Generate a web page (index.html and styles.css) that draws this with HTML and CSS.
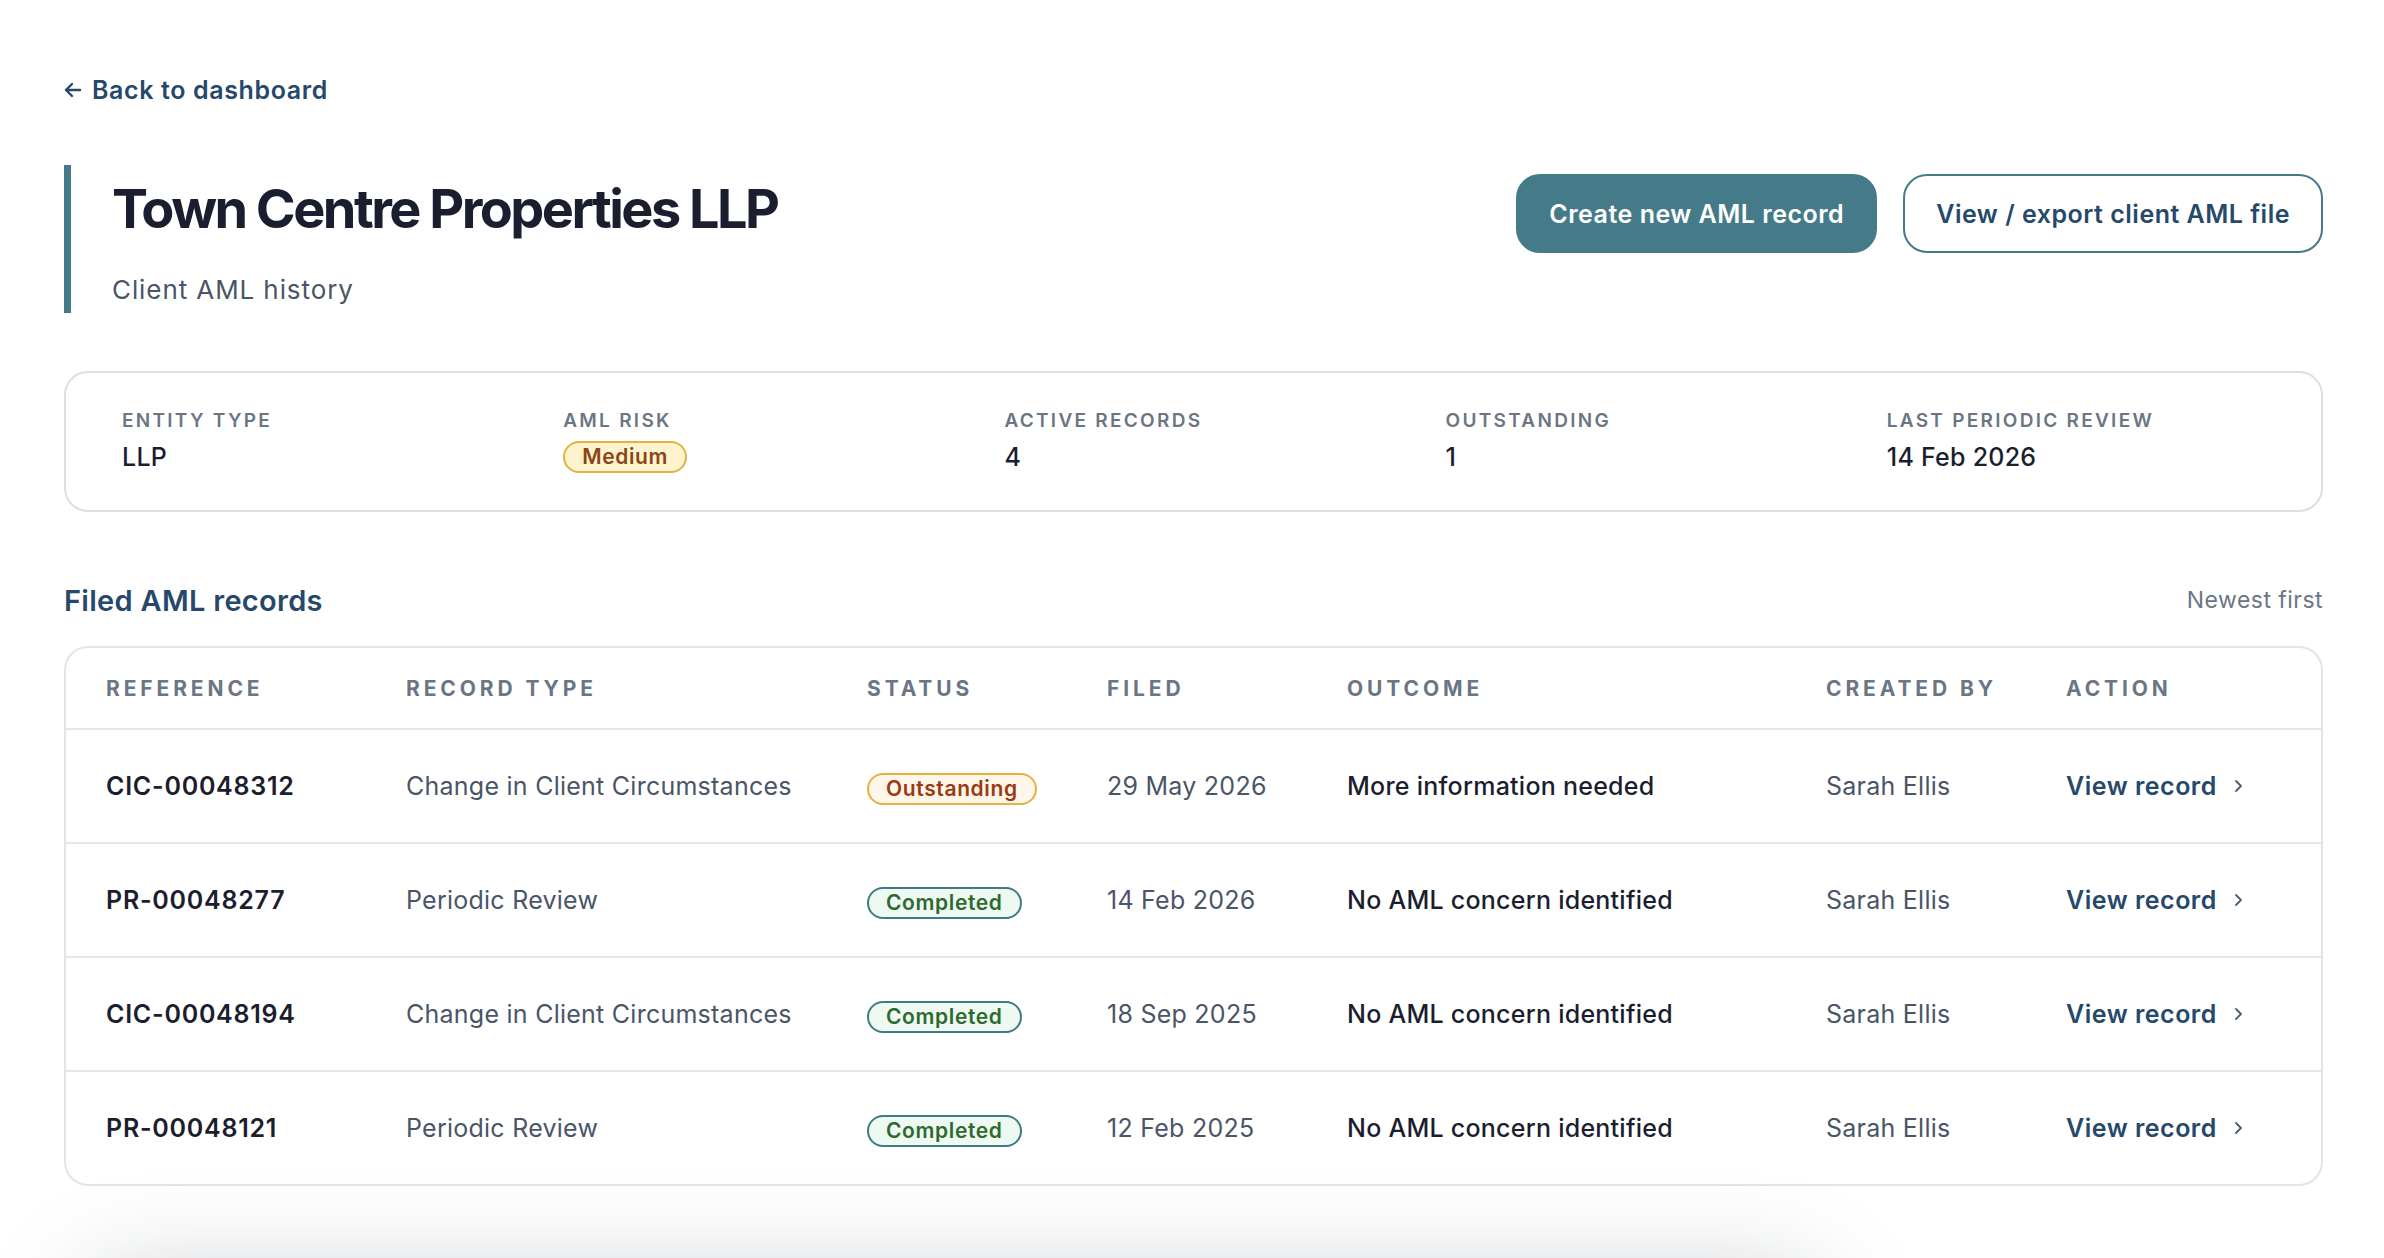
FILE: index.html
```html
<!DOCTYPE html>
<html lang="en">
<head>
    <meta charset="UTF-8">
    <meta name="viewport" content="width=device-width, initial-scale=1.0">
    <title>Town Centre Properties LLP - AML history</title>
    <link rel="stylesheet" href="styles.css">
</head>
<body>
    <div class="page">
        <a href="#" class="back-link">
            <svg width="18" height="16" viewBox="0 0 18 16" fill="none" stroke="currentColor" stroke-width="2.4" stroke-linecap="round" stroke-linejoin="round"><path d="M16 8H2M8 2L2 8l6 6"/></svg>
            Back to dashboard
        </a>

        <div class="page-header">
            <div class="title-block">
                <h1>Town Centre Properties LLP</h1>
                <p class="subtitle">Client AML history</p>
            </div>
            <div class="actions">
                <button class="btn btn-primary">Create new AML record</button>
                <button class="btn btn-outline">View / export client AML file</button>
            </div>
        </div>

        <div class="summary">
            <div class="stat">
                <div class="stat-label">Entity type</div>
                <div class="stat-value">LLP</div>
            </div>
            <div class="stat">
                <div class="stat-label">AML risk</div>
                <div class="stat-value"><span class="badge badge-medium">Medium</span></div>
            </div>
            <div class="stat">
                <div class="stat-label">Active records</div>
                <div class="stat-value">4</div>
            </div>
            <div class="stat">
                <div class="stat-label">Outstanding</div>
                <div class="stat-value">1</div>
            </div>
            <div class="stat">
                <div class="stat-label">Last periodic review</div>
                <div class="stat-value">14 Feb 2026</div>
            </div>
        </div>

        <div class="section-head">
            <h2>Filed AML records</h2>
            <span class="sort-note">Newest first</span>
        </div>

        <div class="records">
            <table>
                <colgroup>
                    <col class="c-ref">
                    <col class="c-type">
                    <col class="c-status">
                    <col class="c-filed">
                    <col class="c-outcome">
                    <col class="c-by">
                    <col class="c-action">
                </colgroup>
                <thead>
                    <tr>
                        <th>Reference</th>
                        <th>Record type</th>
                        <th>Status</th>
                        <th>Filed</th>
                        <th>Outcome</th>
                        <th>Created by</th>
                        <th>Action</th>
                    </tr>
                </thead>
                <tbody>
                    <tr>
                        <td class="ref">CIC-00048312</td>
                        <td>Change in Client Circumstances</td>
                        <td><span class="badge badge-outstanding">Outstanding</span></td>
                        <td>29 May 2026</td>
                        <td class="outcome">More information needed</td>
                        <td>Sarah Ellis</td>
                        <td><a href="#" class="view-link">View record <svg width="10" height="16" viewBox="0 0 10 16" fill="none" stroke="currentColor" stroke-width="1.8" stroke-linecap="round" stroke-linejoin="round"><path d="M3 3l5 5-5 5"/></svg></a></td>
                    </tr>
                    <tr>
                        <td class="ref">PR-00048277</td>
                        <td>Periodic Review</td>
                        <td><span class="badge badge-completed">Completed</span></td>
                        <td>14 Feb 2026</td>
                        <td class="outcome">No AML concern identified</td>
                        <td>Sarah Ellis</td>
                        <td><a href="#" class="view-link">View record <svg width="10" height="16" viewBox="0 0 10 16" fill="none" stroke="currentColor" stroke-width="1.8" stroke-linecap="round" stroke-linejoin="round"><path d="M3 3l5 5-5 5"/></svg></a></td>
                    </tr>
                    <tr>
                        <td class="ref">CIC-00048194</td>
                        <td>Change in Client Circumstances</td>
                        <td><span class="badge badge-completed">Completed</span></td>
                        <td>18 Sep 2025</td>
                        <td class="outcome">No AML concern identified</td>
                        <td>Sarah Ellis</td>
                        <td><a href="#" class="view-link">View record <svg width="10" height="16" viewBox="0 0 10 16" fill="none" stroke="currentColor" stroke-width="1.8" stroke-linecap="round" stroke-linejoin="round"><path d="M3 3l5 5-5 5"/></svg></a></td>
                    </tr>
                    <tr>
                        <td class="ref">PR-00048121</td>
                        <td>Periodic Review</td>
                        <td><span class="badge badge-completed">Completed</span></td>
                        <td>12 Feb 2025</td>
                        <td class="outcome">No AML concern identified</td>
                        <td>Sarah Ellis</td>
                        <td><a href="#" class="view-link">View record <svg width="10" height="16" viewBox="0 0 10 16" fill="none" stroke="currentColor" stroke-width="1.8" stroke-linecap="round" stroke-linejoin="round"><path d="M3 3l5 5-5 5"/></svg></a></td>
                    </tr>
                </tbody>
            </table>
        </div>

        <div class="footer-panel"></div>
    </div>
</body>
</html>
```

FILE: styles.css
```css
body {
    margin: 0;
    font-family: 'Inter', 'Noto Sans', sans-serif;
    background-color: #fff;
    color: #1b1e2e;
}

.page {
    padding: 72px 61px 0 64px;
}

/* Enlace de vuelta */
.back-link {
    display: inline-flex;
    align-items: center;
    gap: 10px;
    font-size: 25px;
    line-height: 36px;
    font-weight: 600;
    letter-spacing: 0.025em;
    color: #26496b;
    text-decoration: none;
}

.page-header {
    display: flex;
    justify-content: space-between;
    align-items: flex-start;
    margin-top: 57px;
}

.title-block {
    border-left: 7px solid #457b89;
    padding: 10px 0 5px 41px;
}

h1 {
    margin: 0;
    font-size: 54px;
    line-height: 67px;
    font-weight: 700;
    letter-spacing: -0.047em;
    color: #1b1e2e;
}

.subtitle {
    margin: 30px 0 0;
    font-size: 26px;
    line-height: 36px;
    letter-spacing: 0.035em;
    color: #4a5568;
}

.actions {
    display: flex;
    gap: 26px;
    margin-top: 9px;
}

.btn {
    font-family: inherit;
    font-size: 25px;
    font-weight: 600;
    letter-spacing: 0.02em;
    height: 79px;
    padding: 0 31px;
    border-radius: 24px;
    cursor: pointer;
}

.btn-primary {
    background-color: #457b89;
    border: 2px solid #457b89;
    color: #fff;
}

.btn-outline {
    background-color: #fff;
    border: 2px solid #457b89;
    color: #26496b;
}

/* Resumen */
.summary {
    display: grid;
    grid-template-columns: repeat(5, 1fr);
    gap: 63px;
    margin-top: 58px;
    padding: 35px 56px 36px 56px;
    border: 2px solid #d8e0e6;
    border-radius: 24px;
}

.stat-label {
    font-size: 19px;
    line-height: 25px;
    font-weight: 600;
    letter-spacing: 0.12em;
    text-transform: uppercase;
    color: #6b7685;
}

.stat-value {
    margin-top: 7px;
    font-size: 25px;
    line-height: 34px;
    font-weight: 500;
    letter-spacing: 0.01em;
    color: #1b1e2e;
    height: 34px;
    display: flex;
    align-items: center;
}

.badge {
    display: inline-block;
    font-size: 21px;
    line-height: 28px;
    font-weight: 600;
    letter-spacing: 0.03em;
    padding: 0 17px;
    border-radius: 16px;
    border: 2px solid;
}

.badge-medium {
    background-color: #fdf4cf;
    border-color: #e2b33e;
    color: #8a4514;
}

.badge-outstanding {
    background-color: #fff6ea;
    border-color: #e2b33e;
    color: #9a3a12;
}

.badge-completed {
    background-color: #eefaf1;
    border-color: #3f7a86;
    color: #2d6a30;
}

td .badge {
    vertical-align: -5px;
}

.section-head {
    display: flex;
    justify-content: space-between;
    align-items: center;
    margin-top: 68px;
    height: 40px;
}

h2 {
    margin: 0;
    font-size: 29px;
    font-weight: 600;
    letter-spacing: 0.01em;
    color: #26496b;
}

.sort-note {
    font-size: 23px;
    letter-spacing: 0.02em;
    color: #6b7685;
}

/* Tabla de registros */
.records {
    margin-top: 26px;
    border: 2px solid #dfe5ea;
    border-radius: 24px;
    overflow: hidden;
}

table {
    width: 100%;
    border-collapse: collapse;
    table-layout: fixed;
}

.c-ref { width: 340px; }
.c-type { width: 461px; }
.c-status { width: 240px; }
.c-filed { width: 240px; }
.c-outcome { width: 479px; }
.c-by { width: 240px; }

th {
    height: 80px;
    padding: 0;
    text-align: left;
    font-size: 21px;
    font-weight: 700;
    letter-spacing: 0.185em;
    text-transform: uppercase;
    color: #6b7685;
}

td {
    height: 112px;
    padding: 0;
    border-top: 2px solid #e2e8ec;
    font-size: 25px;
    letter-spacing: 0.01em;
    color: #4a5568;
}

th:first-child,
td:first-child {
    padding-left: 40px;
}

td.ref {
    font-weight: 600;
    letter-spacing: 0.03em;
    color: #1b1e2e;
}

td.outcome {
    font-weight: 500;
    color: #1b1e2e;
}

.view-link {
    display: inline-flex;
    align-items: center;
    gap: 16px;
    font-weight: 600;
    letter-spacing: 0.02em;
    color: #26496b;
    text-decoration: none;
}

.view-link svg {
    color: #4a5d75;
}

.footer-panel {
    margin: 105px 510px 0 30px;
    height: 200px;
    background-color: #fff;
    border-radius: 24px;
    box-shadow: 0 -6px 110px rgba(20, 30, 45, 0.26);
}
```
